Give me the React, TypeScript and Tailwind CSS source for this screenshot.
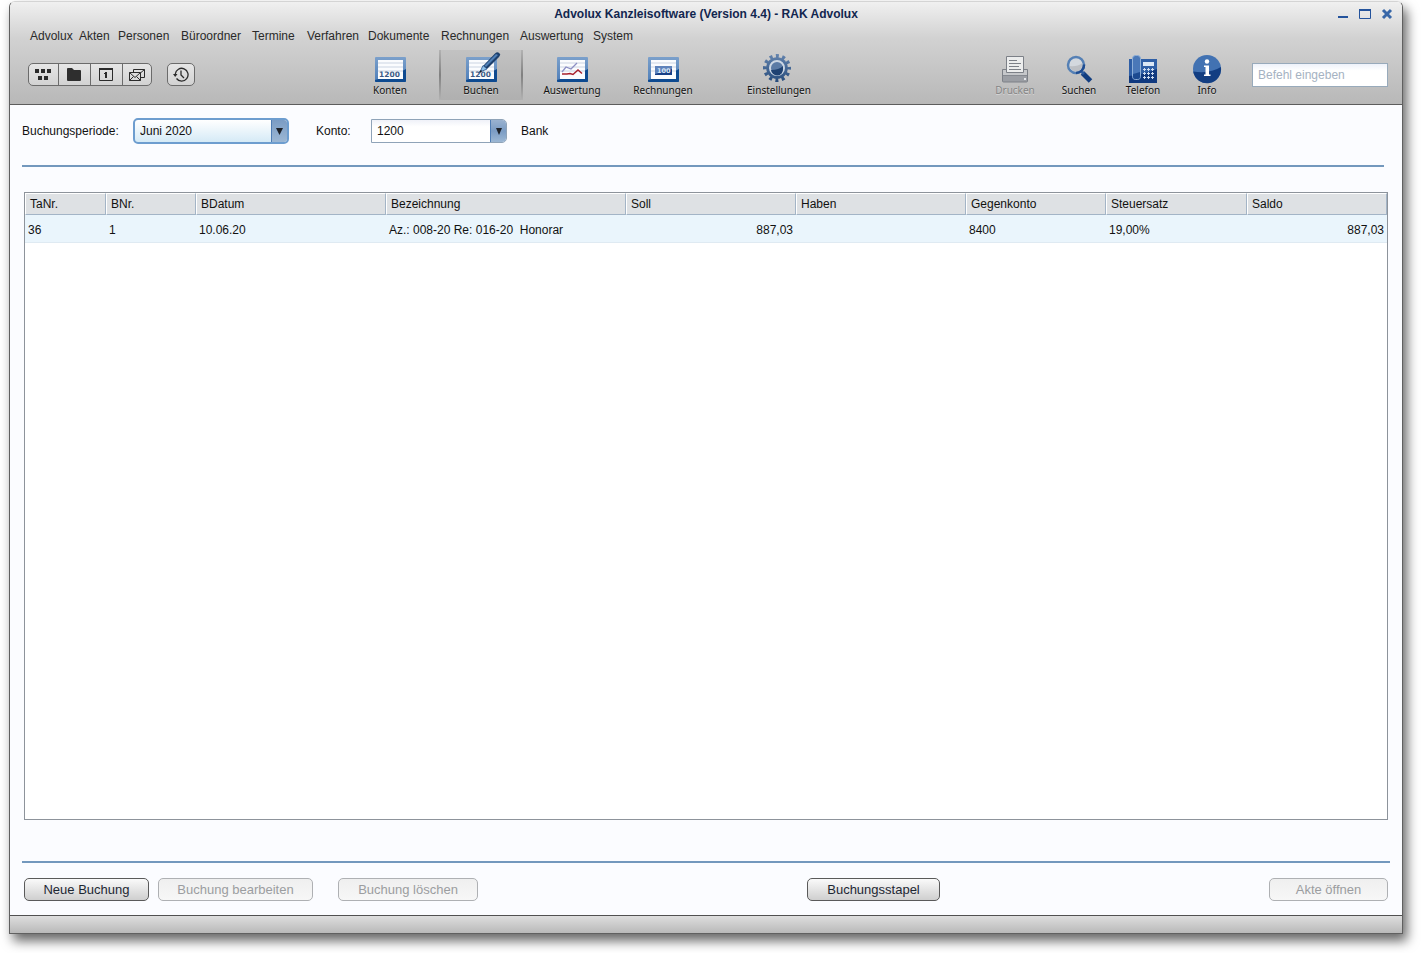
import type { ReactNode } from 'react';

const menu = [
  'Advolux', 'Akten', 'Personen', 'Büroordner', 'Termine',
  'Verfahren', 'Dokumente', 'Rechnungen', 'Auswertung', 'System',
];

const columns = [
  { label: 'TaNr.', width: 'w-[81px]' },
  { label: 'BNr.', width: 'w-[90px]' },
  { label: 'BDatum', width: 'w-[190px]' },
  { label: 'Bezeichnung', width: 'w-[240px]' },
  { label: 'Soll', width: 'w-[170px]', right: true },
  { label: 'Haben', width: 'w-[170px]', right: true },
  { label: 'Gegenkonto', width: 'w-[140px]' },
  { label: 'Steuersatz', width: 'w-[141px]' },
  { label: 'Saldo', width: '', right: true },
];

const rows = [
  ['36', '1', '10.06.20', 'Az.: 008-20 Re: 016-20  Honorar', '887,03', '', '8400', '19,00%', '887,03'],
];

function Frame({ id, wide, children }: { id: string; wide?: boolean; children: ReactNode }) {
  return (
    <svg
      width={wide ? 36 : 32}
      height="32"
      viewBox={wide ? '0 0 36 32' : '0 0 32 32'}
      className={wide ? 'ml-1' : ''}
      aria-hidden="true"
    >
      <defs>
        <linearGradient id={id} x1="0" y1="0" x2="0" y2="1">
          <stop offset="0" stopColor="#7ba0cb" />
          <stop offset="1" stopColor="#4d7db8" />
        </linearGradient>
      </defs>
      <rect x="1" y="5" width="31" height="25" rx="1" fill={`url(#${id})`} />
      <path d="M32 17 Q24 22 1 28 V29 Q1 30 2 30 H31 Q32 30 32 29 Z" fill="#0e4a90" />
      <rect x="4" y="8" width="25" height="19" fill="#fbfcfe" />
      <path d="M4 11h25M4 15h25M4 19h25" stroke="#e3e8f0" strokeWidth="2" />
      {children}
    </svg>
  );
}

function Number1200() {
  return (
    <text x="5" y="25" fontFamily="DejaVu Sans" fontWeight="700" fontSize="7.5" fill="#3b5a85">1200</text>
  );
}

function KontenIcon() {
  return <Frame id="konten"><Number1200 /></Frame>;
}

function BuchenIcon() {
  return (
    <Frame id="buchen" wide>
      <Number1200 />
      <path d="M18 14 L30 1.500 Q33 -1 35 2 Q35.500 3 34 5 L22 17 Z" fill="#1c3f6c" />
      <path d="M19.500 13.500 L31 2 L33 3 L21 15 Z" fill="#4f7fb6" />
      <path d="M15 20 L18 13.500 L22 17 Z" fill="#8fc1ea" stroke="#2a568c" strokeWidth=".8" />
      <path d="M14.500 20.500 L16.500 18.500" stroke="#111827" strokeWidth="1.500" />
    </Frame>
  );
}

function AuswertungIcon() {
  return (
    <Frame id="auswertung">
      <path d="M6 20 L10 15 L15 17 L21 11" fill="none" stroke="#8c8fc4" strokeWidth="1.300" />
      <path d="M6 22 H11 L14 21.500 L17 22.500 L22 18 L26 21.500" fill="none" stroke="#a8202c" strokeWidth="1.500" />
    </Frame>
  );
}

function RechnungenIcon() {
  return (
    <Frame id="rechnungen">
      <rect x="8" y="14" width="17" height="9" fill="#5f83bb" />
      <path d="M25 17 L8 22 V23 H25Z" fill="#173f86" />
      <text x="10" y="21" fontFamily="DejaVu Sans" fontWeight="700" fontSize="6.5" fill="#dce8f7">100</text>
    </Frame>
  );
}

function GearIcon() {
  return (
    <svg width="32" height="32" viewBox="2 0 32 32" aria-hidden="true">
      <defs>
        <linearGradient id="gear" gradientUnits="userSpaceOnUse" x1="0" y1="2" x2="0" y2="30">
          <stop offset="0" stopColor="#6484ae" />
          <stop offset="1" stopColor="#274c7c" />
        </linearGradient>
      </defs>
      <circle cx="16" cy="16" r="12" fill="none" stroke="url(#gear)" strokeWidth="4" strokeDasharray="3 3.283" strokeDashoffset="1.500" />
      <circle cx="16" cy="16" r="10.800" fill="url(#gear)" />
      <circle cx="16" cy="16" r="7" fill="#5b7ba5" stroke="#cbd6e3" strokeWidth="2" />
      <path d="M22 14 Q18 18 10 18 A6 6 0 0 0 22 17Z" fill="#1f4272" />
    </svg>
  );
}

function PrinterIcon() {
  return (
    <svg width="28" height="28" viewBox="0 0 28 28" aria-hidden="true">
      <path d="M1.500 14.500 H26.500 V26 Q26.500 27 25.500 27 H2.500 Q1.500 27 1.500 26Z" fill="#9b9ea4" stroke="#7c8087" />
      <path d="M2 15H26V20H2Z" fill="#c5c7ca" />
      <path d="M5.500 1.500 H22.500 V17.500 H5.500Z" fill="#eceded" stroke="#7c8087" />
      <path d="M8 5.500H16M8 8.500H20M8 11.500H18M8 14.500H20" stroke="#7c8087" />
      <path d="M2 20.500H26" stroke="#858990" />
      <rect x="23" y="23" width="2" height="2" fill="#e5e7eb" />
    </svg>
  );
}

function SearchIcon() {
  return (
    <svg width="28" height="28" viewBox="0 0 28 28" aria-hidden="true">
      <path d="M17.500 18 L25.500 26" stroke="#123e80" strokeWidth="5" />
      <path d="M16 16 L19 19" stroke="#2c5ca0" strokeWidth="3" />
      <circle cx="11" cy="10" r="8" fill="#d3d8de" stroke="#5580b5" strokeWidth="2.500" />
      <path d="M4.500 11 Q12 12 17.500 8 Q17.500 16.500 11 16.500 Q6 16 4.500 11Z" fill="#bcbfc4" />
      <path d="M19 9.500 A8 8 0 0 1 11 18" fill="none" stroke="#1f4d92" strokeWidth="2.500" />
    </svg>
  );
}

function PhoneIcon() {
  const keys = [15, 19, 23].flatMap((x) => [14, 18, 22].map((y) => ({ x, y })));
  return (
    <svg width="30" height="30" viewBox="0 0 30 30" aria-hidden="true">
      <rect x="1" y="5" width="28" height="24" fill="#2f5fa6" />
      <path d="M29 15 Q18 20 1 22 V29 H29Z" fill="#10397f" />
      <rect x="15" y="8" width="11" height="4" fill="#dbe7f5" />
      {keys.map((k) => (
        <path key={`${k.x}-${k.y}`} d={`M${k.x} ${k.y + 1.5}h3M${k.x + 1.5} ${k.y}v3`} stroke="#cfddf0" />
      ))}
      <rect x="4.500" y="1.500" width="8" height="24" rx="3" fill="#4a78b8" stroke="#8fb0d8" />
      <path d="M5 20 Q9 19 12 18 V23 Q12 25 10 25 H7 Q5 25 5 23Z" fill="#1c4a90" />
    </svg>
  );
}

function InfoIcon() {
  return (
    <svg width="30" height="30" viewBox="0 0 30 30" aria-hidden="true">
      <circle cx="15" cy="15" r="14" fill="#4272b2" />
      <path d="M28.900 13 Q18 20 1.200 17.500 A14 14 0 0 0 28.900 13Z" fill="#123e82" />
      <circle cx="15" cy="7.500" r="2.200" fill="#fff" />
      <path d="M12 11.500 H17 V20.500 H18.500 V22 H12 V20.500 H13.500 V13 H12Z" fill="#fff" />
    </svg>
  );
}

const modules = [
  { label: 'Konten', icon: <KontenIcon /> },
  { label: 'Buchen', icon: <BuchenIcon />, active: true },
  { label: 'Auswertung', icon: <AuswertungIcon /> },
  { label: 'Rechnungen', icon: <RechnungenIcon /> },
  { label: 'Einstellungen', icon: <GearIcon />, apart: true },
];

const tools = [
  { label: 'Drucken', icon: <PrinterIcon />, disabled: true },
  { label: 'Suchen', icon: <SearchIcon /> },
  { label: 'Telefon', icon: <PhoneIcon /> },
  { label: 'Info', icon: <InfoIcon /> },
];

function TitleBar() {
  return (
    <div className="grid h-6 grid-cols-[1fr_auto_1fr] items-center">
      <span />
      <h1 className="text-[12px] font-bold leading-4 text-[#12264f]">Advolux Kanzleisoftware (Version 4.4) - RAK Advolux</h1>
      <div className="flex justify-end gap-[10px] pr-[9px]">
        <button aria-label="Minimieren">
          <svg width="12" height="12" viewBox="0 0 12 12"><path d="M1 9h10" stroke="#24539c" strokeWidth="2" /></svg>
        </button>
        <button aria-label="Maximieren">
          <svg width="12" height="12" viewBox="0 0 12 12"><path d="M.5 1.500h11v9H.5z" fill="none" stroke="#24539c" /><path d="M0 2h12" stroke="#24539c" strokeWidth="2" /></svg>
        </button>
        <button aria-label="Schließen">
          <svg width="12" height="12" viewBox="0 0 12 12"><path d="M2 2l8 8M10 2l-8 8" stroke="#3867a8" strokeWidth="3" /></svg>
        </button>
      </div>
    </div>
  );
}

function QuickButtons() {
  const cell = 'flex w-8 items-center justify-center border-r border-[#6b6b6b] pr-px first:w-[30px] last:w-7 last:border-r-0 last:pr-0';
  return (
    <div className="flex w-[328px] gap-[15px] pt-[13px] pl-[8px]">
      <div className="flex h-[23px] w-[124px] rounded-[5px] border border-[#6b6b6b] bg-linear-to-b from-[#e6e6e6] to-[#d2d2d2]">
        <button aria-label="Übersicht" className={cell}>
          <svg width="16" height="13" viewBox="0 0 16 13" fill="#2b2b2b"><path d="M0 1h4v4H0zM6 1h4v4H6zM12 1h4v4h-4zM3 8h4v4H3zM9 8h4v4H9z" /></svg>
        </button>
        <button aria-label="Akten" className={cell}>
          <svg width="16" height="13" viewBox="0 0 16 13"><path d="M1 1q0-1 1-1h4l2 2h6q1 0 1 1v9q0 1-1 1H2q-1 0-1-1z" fill="#2e2e2e" /></svg>
        </button>
        <button aria-label="Kalender" className={cell}>
          <svg width="14" height="13" viewBox="0 0 14 13"><path d="M.5.5h13v12H.5z" fill="none" stroke="#2b2b2b" /><path d="M0 1h14" stroke="#2b2b2b" strokeWidth="2" /><path d="M7 4v6" stroke="#2b2b2b" strokeWidth="2" /><path d="M5 5.500h2" stroke="#2b2b2b" /></svg>
        </button>
        <button aria-label="Nachrichten" className={cell}>
          <svg width="16" height="13" viewBox="0 0 16 13" fill="none" stroke="#2b2b2b"><path d="M.5 4.500h11v8H.5zM.5 4.500L6 9.500l5.500-5M.5 12.500l4-4M11.500 12.500l-4-4M4.500 4V1.500h11v8H12M12 4.500l3.500-3" /></svg>
        </button>
      </div>
      <button aria-label="Verlauf" className="flex h-[23px] w-7 items-center justify-center rounded-[5px] border border-[#6b6b6b] bg-linear-to-b from-[#e6e6e6] to-[#d2d2d2]">
        <svg width="16" height="15" viewBox="0 0 16 15" fill="none" stroke="#2b2b2b" strokeWidth="1.300"><path d="M3.500 11.500A6.400 6.400 0 1 0 2.300 7" /><path d="M8 3.500V8l3 3" /><path d="M0 7h4.500L2.200 10z" fill="#2b2b2b" stroke="none" /></svg>
      </button>
    </div>
  );
}

function Toolbar() {
  const label = 'text-[10px] leading-[12px] font-["Noto_Sans",sans-serif] [text-shadow:0_1px_0_rgba(255,255,255,0.4)]';
  return (
    <div className="flex h-[54px] items-start pl-[10px] pr-[14px]">
      <QuickButtons />
      <div className="flex gap-[7px]">
        {modules.map((m) => (
          <button
            key={m.label}
            className={`flex h-[50px] w-[84px] flex-col items-center pt-[2px] ${m.active ? 'border-x-2 bg-black/5 [border-image:linear-gradient(#b4b4b4,#808080,#b4b4b4)_1]' : ''} ${m.apart ? 'ml-[25px]' : ''}`}
          >
            {m.icon}
            <span className={label}>{m.label}</span>
          </button>
        ))}
      </div>
      <div className="ml-auto flex">
        {tools.map((t) => (
          <button
            key={t.label}
            disabled={t.disabled}
            className="flex h-[50px] w-16 flex-col items-center pt-1 text-[#111] disabled:text-[#858585]"
          >
            <span className="flex h-[30px] items-center">{t.icon}</span>
            <span className={label}>{t.label}</span>
          </button>
        ))}
      </div>
      <input
        aria-label="Befehl eingeben"
        placeholder="Befehl eingeben"
        className="ml-[13px] mt-[13px] h-6 w-[136px] border border-[#98aabb] bg-linear-to-b from-[#eef2fa] to-white to-30% px-[5px] text-[12px] placeholder:text-[#a5b2c2]"
      />
    </div>
  );
}

function Filters() {
  return (
    <div className="flex h-[52px] items-center pl-[12px]">
      <label htmlFor="periode" className="w-[111px]">Buchungsperiode:</label>
      <div className="relative h-[26px] w-[156px] overflow-hidden rounded-[5px] border-2 border-[#6d9dcf] bg-linear-to-b from-white to-[#d5eaf6]">
        <select id="periode" className="h-full w-full appearance-none pl-[5px] pr-6">
          <option>Juni 2020</option>
        </select>
        <span className="pointer-events-none absolute inset-y-0 right-0 flex w-4 items-center justify-center border-l border-[#4f7db5] bg-linear-to-b from-[#7b9cc4] to-[#9cb7d4]">
          <svg width="7" height="7" viewBox="0 0 7 7"><path d="M0 0h7L3.500 7z" fill="#1e2229" /></svg>
        </span>
      </div>
      <label htmlFor="konto" className="ml-[27px] w-[55px]">Konto:</label>
      <div className="relative h-6 w-[136px] overflow-hidden rounded-r-[5px] border border-[#8fa3b8] bg-linear-to-b from-[#eff1f8] to-white to-30%">
        <select id="konto" className="h-full w-full appearance-none pl-[5px] pr-6">
          <option>1200</option>
        </select>
        <span className="pointer-events-none absolute inset-y-0 right-0 flex w-4 items-center justify-center border-l border-[#4f7db5] bg-linear-to-b from-[#9ab2d0] via-[#7b9cc4] to-[#9cb7d4]">
          <svg width="6" height="7" viewBox="0 0 6 7"><path d="M0 0h6L3 7z" fill="#1e2229" /></svg>
        </span>
      </div>
      <span className="ml-[14px]">Bank</span>
    </div>
  );
}

function Bookings() {
  return (
    <div className="mx-[14px] flex-1 border border-[#8d939b] bg-white">
      <table className="w-full table-fixed border-separate border-spacing-0">
        <thead>
          <tr className="h-[22px] bg-[#dee1e4]">
            {columns.map((c) => (
              <th key={c.label} className={`${c.width} border-r border-b border-t border-r-[#a3b4c6] border-b-[#a3b4c6] border-t-white border-l border-l-white pl-1 text-left font-normal leading-4`}>{c.label}</th>
            ))}
          </tr>
        </thead>
        <tbody>
          {rows.map((r) => (
            <tr key={r[0]} className="h-7 bg-[#eaf5fc]">
              {r.map((v, i) => (
                <td key={columns[i].label} className={`whitespace-pre border-b border-[#dfeaf2] px-[3px] pt-[2px] leading-4 ${columns[i].right ? 'text-right' : ''}`}>{v}</td>
              ))}
            </tr>
          ))}
        </tbody>
      </table>
    </div>
  );
}

function ActionButton({ children, className, disabled }: { children: ReactNode; className: string; disabled?: boolean }) {
  return (
    <button
      disabled={disabled}
      className={`h-[23px] rounded-[5px] border border-[#5a5a5a] bg-linear-to-b from-[#fafafa] to-[#cfcfcf] text-[13px] leading-4 text-[#1d2733] disabled:border-[#aeb0b3] disabled:from-[#efefef] disabled:to-[#f7f7f7] disabled:text-[#9b9da0] ${className}`}
    >
      {children}
    </button>
  );
}

export default function App() {
  return (
    <div className='flex min-h-screen flex-col bg-white pt-px pr-[19px] pb-[19px] pl-[9px] font-["Liberation_Sans",Arial,sans-serif] text-[12px] text-[#111]'>
      <div className="flex flex-1 flex-col overflow-hidden rounded-t-[6px] border border-t-[#d4d4d4] border-[#606060] shadow-[4px_7px_12px_0_rgba(0,0,0,0.6)]">
        <header className="border-b border-[#5c5c5c] bg-linear-to-b from-[#f0f0f0] via-[#d2d2d2] via-35% to-[#b8b8b8]">
          <TitleBar />
          <nav className="grid h-6 grid-cols-[49px_39px_63px_71px_55px_61px_73px_79px_73px_auto] pt-[2px] pl-[20px] leading-4 text-[#2a2a2a]">
            {menu.map((m) => (
              <button key={m} className="h-4 text-left">{m}</button>
            ))}
          </nav>
          <Toolbar />
        </header>
        <main className="flex flex-1 flex-col bg-[#fbfcff]">
          <Filters />
          <hr className="mt-2 mr-[18px] mb-[25px] ml-3 border-t-2 border-[#7398bd]" />
          <Bookings />
          <hr className="mt-[41px] mr-3 ml-3 border-t-2 border-[#7398bd]" />
          <div className="flex px-[14px] pt-[15px] pb-[14px]">
            <ActionButton className="w-[125px]">Neue Buchung</ActionButton>
            <ActionButton className="ml-[9px] w-[155px]" disabled>Buchung bearbeiten</ActionButton>
            <ActionButton className="ml-[25px] w-[140px]" disabled>Buchung löschen</ActionButton>
            <span className="flex-1" />
            <ActionButton className="w-[133px]">Buchungsstapel</ActionButton>
            <span className="flex-1" />
            <ActionButton className="w-[119px]" disabled>Akte öffnen</ActionButton>
          </div>
        </main>
        <footer className="h-[18px] border-t border-[#505050] bg-linear-to-b from-[#dedede] to-[#b9b9b9]" />
      </div>
    </div>
  );
}
